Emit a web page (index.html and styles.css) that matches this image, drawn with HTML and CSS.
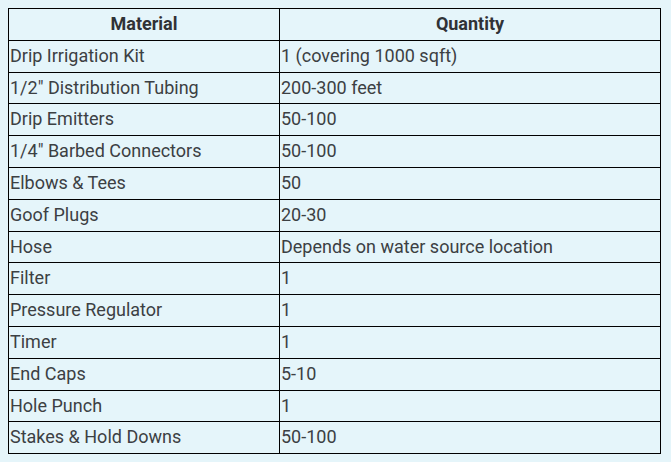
FILE: index.html
```html
<!DOCTYPE html>
<html>
<head>
<meta charset="utf-8">
<link rel="stylesheet" href="styles.css">
</head>
<body>
<table class="materials">
  <thead>
    <tr><th class="col-material">Material</th><th>Quantity</th></tr>
  </thead>
  <tbody>
    <tr><td>Drip Irrigation Kit</td><td>1 (covering 1000 sqft)</td></tr>
    <tr><td>1/2" Distribution Tubing</td><td>200-300 feet</td></tr>
    <tr><td>Drip Emitters</td><td>50-100</td></tr>
    <tr><td>1/4" Barbed Connectors</td><td>50-100</td></tr>
    <tr><td>Elbows &amp; Tees</td><td>50</td></tr>
    <tr><td>Goof Plugs</td><td>20-30</td></tr>
    <tr><td>Hose</td><td>Depends on water source location</td></tr>
    <tr><td>Filter</td><td>1</td></tr>
    <tr><td>Pressure Regulator</td><td>1</td></tr>
    <tr><td>Timer</td><td>1</td></tr>
    <tr><td>End Caps</td><td>5-10</td></tr>
    <tr><td>Hole Punch</td><td>1</td></tr>
    <tr><td>Stakes &amp; Hold Downs</td><td>50-100</td></tr>
  </tbody>
</table>
</body>
</html>
```

FILE: styles.css
```css
html, body {
  background: #e5f5fa;
}
body {
  margin: 8px;
  font-family: Roboto, "Liberation Sans", sans-serif;
  font-size: 18px;
  color: #3c4043;
}
.materials {
  border-collapse: collapse;
  width: 653px;
  table-layout: fixed;
}
.materials th,
.materials td {
  border: 1px solid #000;
  padding: 5px 1px;
  height: 20.8px;
  line-height: 20.8px;
  text-align: left;
  font-weight: 400;
  box-sizing: content-box;
}
.materials th {
  text-align: center;
  font-weight: 700;
  color: #303236;
}
.col-material {
  width: 268px;
}
```
